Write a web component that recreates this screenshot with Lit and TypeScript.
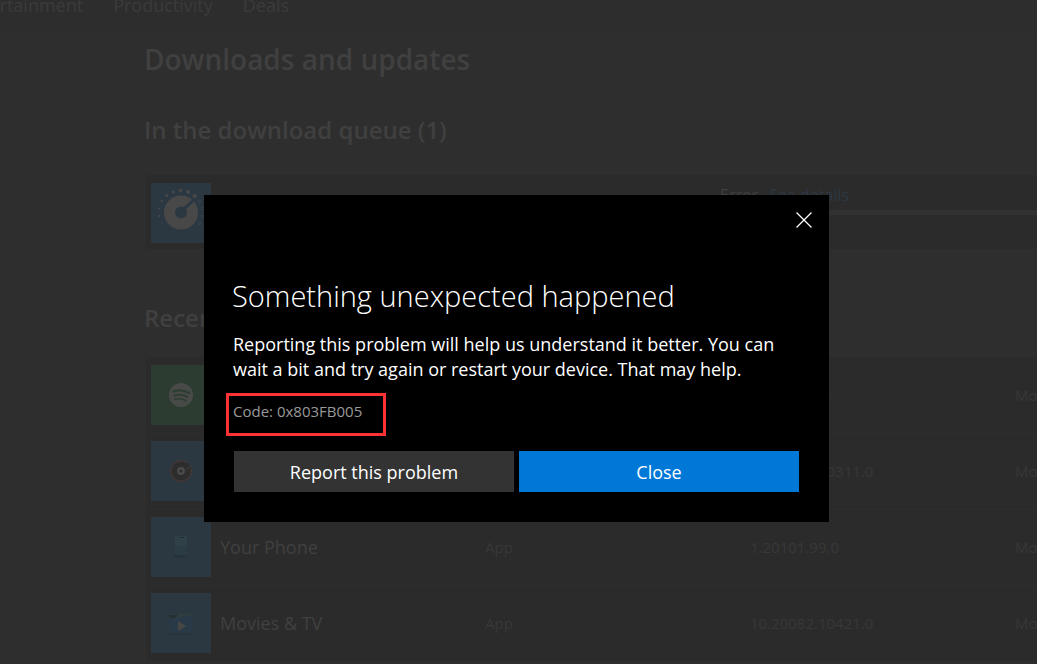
import { LitElement, html, css, svg } from "lit";
import { customElement, state } from "lit/decorators.js";

type Tile = "spotify" | "groove" | "phone" | "movies";

interface Entry {
  tile: Tile;
  name: string;
  kind: string;
  version: string;
  status: string;
}

const ENTRIES: Entry[] = [
  { tile: "spotify", name: "Spotify", kind: "App", version: "1.147.684.0", status: "Modified today" },
  { tile: "groove", name: "Groove Music", kind: "App", version: "10.20092.10311.0", status: "Modified today" },
  { tile: "phone", name: "Your Phone", kind: "App", version: "1.20101.99.0", status: "Modified today" },
  { tile: "movies", name: "Movies & TV", kind: "App", version: "10.20082.10421.0", status: "Modified today" },
];

const DIAL_DOTS = [
  [9.5, 40, 0.8], [7, 33, 1], [7, 25.5, 1.1], [9.5, 18, 1.2], [14.5, 12.5, 1.4],
  [21, 9, 1.5], [28.5, 7.5, 1.7], [36, 9, 1.9], [42.5, 13, 2.1],
];
const DIAL_RINGS = [[48.5, 18.5], [51, 25.5], [51, 33.5], [48.5, 40.5]];

const dial = svg`
  ${DIAL_DOTS.map(([x, y, r]) => svg`<circle cx=${x + 1.2} cy=${y} r=${r} fill="#484848" />`)}
  ${DIAL_RINGS.map(([x, y]) => svg`<rect x=${x - 1} y=${y - 1} width="2" height="2" fill="none" stroke="#34414c" stroke-width="1" />`)}
  <circle cx="30" cy="29.500" r="11.500" fill="none" stroke="#484848" stroke-width="11" />
  <path d="M32.500 26.500 42.500 17" stroke="#2b3843" stroke-width="3" />`;

const tiles = {
  spotify: svg`
    <circle cx="30" cy="30" r="12" fill="#484a48" />
    <g fill="none" stroke="#2d3d31" stroke-linecap="round">
      <path d="M22.500 26.300c5-1.500 10.800-1 15.500 1.600" stroke-width="2.300" />
      <path d="M23.200 30.500c4.400-1.300 9.300-.8 13.200 1.500" stroke-width="1.900" />
      <path d="M23.800 34.400c3.800-1 7.700-.7 11 1.300" stroke-width="1.500" />
    </g>`,
  groove: svg`
    <circle cx="30" cy="30" r="10.500" fill="#2d2d2e" />
    <path d="M36.500 22.200A10.200 10.200 0 1 0 40 28" fill="none" stroke="#443836" stroke-width="1.500" />
    <path d="M35 28.500 40.500 24.500" fill="none" stroke="#443836" stroke-width="1.500" />
    <circle cx="30" cy="30" r="2.700" fill="none" stroke="#4a4a4a" stroke-width="2.400" />`,
  phone: svg`
    <rect x="23" y="37" width="14" height="4" rx="1" fill="#28333b" />
    <rect x="24" y="19" width="12" height="20" rx="1" fill="#2f4147" />
    <rect x="24" y="29" width="12" height="9" fill="#2c3c45" />
    <rect x="24" y="38" width="12" height="2" fill="#27323a" />
    <path d="M27 20.500h1M29 20.500h4" stroke="#232b30" />`,
  movies: svg`
    <path d="M18 21.500 39.500 19.500 41 23 20 26z" fill="#2e3d3f" />
    <path d="M18 22.500 27 21.500 24 25 20 27z" fill="#262f32" />
    <rect x="18" y="39" width="23" height="3" fill="#28333c" />
    <path d="M19 25h12l2-2h8v17H19z" fill="#293947" />
    <path d="M27 28v10l8-5z" fill="#484745" />`,
};

@customElement("app-tile")
class AppTile extends LitElement {
  static properties = { kind: { type: String, reflect: true } };
  declare kind: string;

  static styles = css`
    :host {
      display: block;
      width: 60px;
      height: 60px;
      background: #2b3741;
    }
    :host([kind="spotify"]) {
      background: #2d3c31;
    }
    .art {
      display: block;
    }
  `;

  render() {
    const art = this.kind === "dial" ? dial : tiles[this.kind as Tile];
    return html`<svg class="art" width="60" height="60" viewBox="0 0 60 60" aria-hidden="true">${art}</svg>`;
  }
}

@customElement("error-dialog")
class ErrorDialog extends LitElement {
  static styles = css`
    :host {
      display: block;
      width: 625px;
      max-width: 100%;
      box-sizing: border-box;
      background: #000;
      color: #fff;
      padding: 0 30px 30px;
    }
    button {
      font: inherit;
      color: inherit;
      border: 0;
      border-radius: 0;
      padding: 0;
      cursor: pointer;
    }
    .bar {
      display: flex;
      justify-content: flex-end;
      margin-right: -30px;
    }
    .dismiss {
      display: grid;
      place-items: center;
      width: 50px;
      height: 50px;
      background: none;
    }
    .title {
      margin: 31px 0 0 -2px;
      font-size: 29px;
      line-height: 40px;
      font-weight: 300;
    }
    .text {
      margin: 16px 0 0 -1px;
      font-size: 18px;
      line-height: 25px;
    }
    .code {
      width: fit-content;
      margin: 11px 0 15px -8px;
      padding: 5px 21px 12px 4px;
      border: 3px solid #fd3234;
      color: #999;
      font-size: 15px;
      line-height: 20px;
    }
    .actions {
      display: grid;
      grid-template-columns: 1fr 1fr;
      gap: 5px;
    }
    .action {
      height: 41px;
      font-size: 18px;
      background: #333;
    }
    .primary {
      background: #0078d7;
    }
  `;

  private close() {
    this.dispatchEvent(new CustomEvent("dismiss"));
  }

  render() {
    return html`
      <div class="bar">
        <button class="dismiss" aria-label="Dismiss" @click=${this.close}>
          <svg width="16" height="16" viewBox="0 0 16 16" fill="none" stroke="#fff" stroke-width="1.300">
            <path d="M.5.5l15 15M15.500.5l-15 15" />
          </svg>
        </button>
      </div>
      <h2 class="title">Something unexpected happened</h2>
      <p class="text">
        Reporting this problem will help us understand it better. You can wait a bit and try again or restart your
        device. That may help.
      </p>
      <p class="code">Code: 0x803FB005</p>
      <div class="actions">
        <button class="action">Report this problem</button>
        <button class="action primary" @click=${this.close}>Close</button>
      </div>
    `;
  }
}

@customElement("app-root")
class AppRoot extends LitElement {
  @state() private dialogOpen = true;

  static styles = css`
    :host {
      display: block;
      height: 100vh;
      overflow: hidden;
      background: #2e2e2e;
      color: #404040;
      font-family: "Segoe UI", "Open Sans", sans-serif;
    }
    .nav {
      display: flex;
      gap: 30px;
      height: 32px;
      margin-left: -38px;
      background: #2d2d2d;
    }
    .link {
      margin-top: -7px;
      color: #3b3b3b;
      font-size: 18px;
      line-height: 24px;
      text-decoration: none;
    }
    .page {
      padding-left: 144px;
    }
    .title {
      margin: 7px 0 0;
      font-size: 28px;
      line-height: 40px;
      font-weight: 600;
    }
    .section {
      margin: 35px 0 29px;
      font-size: 24px;
      line-height: 32px;
      font-weight: 600;
    }
    .queue {
      display: grid;
      grid-template-columns: 569px 1fr;
      margin-left: 2px;
      padding: 8px 0 6px 5px;
      background: #2b2b2b;
    }
    .state {
      display: flex;
      gap: 11px;
      font-size: 16px;
      line-height: 22px;
      padding-top: 1px;
    }
    .progress {
      height: 5px;
      margin-top: 4px;
      background: #323232;
    }
    .details {
      color: #2b3843;
      text-decoration: none;
    }
    .recent {
      margin: 53px 0 23px;
    }
    .table {
      width: calc(100% + 100px);
      margin-left: 2px;
      table-layout: fixed;
      border-collapse: collapse;
      background: #2b2b2b;
      font-size: 15px;
      text-align: left;
    }
    .row {
      height: 76px;
      border-bottom: 1px solid #2e2e2e;
    }
    .cell {
      padding: 0;
      color: #383838;
      width: 265px;
    }
    .icon {
      width: 69px;
      padding-left: 5px;
    }
    .name {
      color: #404040;
      font-size: 18px;
      font-weight: 400;
    }
    .status {
      width: auto;
      white-space: nowrap;
    }
    .overlay {
      position: fixed;
      inset: 0;
      display: flex;
      justify-content: center;
      align-items: flex-start;
      padding: 195px 4px 0 0;
    }
  `;

  render() {
    return html`
      <nav class="nav">
        <a class="link" href="#entertainment">Entertainment</a>
        <a class="link" href="#productivity">Productivity</a>
        <a class="link" href="#deals">Deals</a>
      </nav>
      <main class="page">
        <h1 class="title">Downloads and updates</h1>
        <h2 class="section">In the download queue (1)</h2>
        <div class="queue">
          <app-tile kind="dial"></app-tile>
          <div>
            <div class="state"><span>Error</span><a class="details" href="#details">See details</a></div>
            <div class="progress"></div>
          </div>
        </div>
        <h2 class="section recent">Recent activity</h2>
        <table class="table">
          <tbody>
            ${ENTRIES.map(
              (entry) => html`
                <tr class="row">
                  <td class="cell icon"><app-tile kind=${entry.tile}></app-tile></td>
                  <th class="cell name" scope="row">${entry.name}</th>
                  <td class="cell">${entry.kind}</td>
                  <td class="cell">${entry.version}</td>
                  <td class="cell status">${entry.status}</td>
                </tr>
              `,
            )}
          </tbody>
        </table>
      </main>
      ${this.dialogOpen
        ? html`<div class="overlay">
            <error-dialog role="dialog" aria-label="Error" @dismiss=${() => (this.dialogOpen = false)}></error-dialog>
          </div>`
        : null}
    `;
  }
}
